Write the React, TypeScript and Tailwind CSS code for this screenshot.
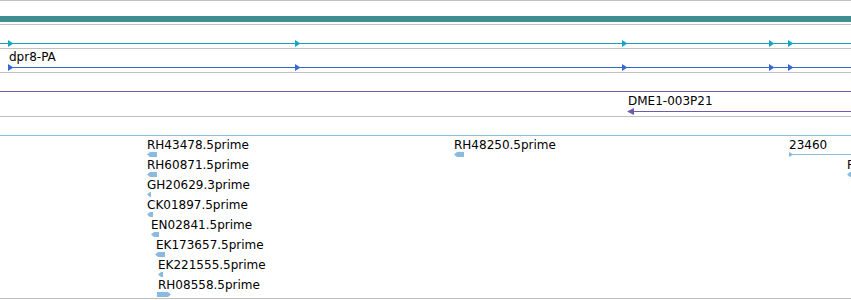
import React from "react";

const CYAN = "#1f9cb9";
const CYAN_HEAD = "#13a6c9";
const BLUE = "#3766c6";
const BLUE_HEAD = "#356ad8";
const PURPLE = "#6f5aab";
const LBLUE = "#8bbadf";

const heads = [8, 295, 622, 769, 788];

function Heads({ color }: { color: string }) {
  return (
    <>
      {heads.map((x) => (
        <polygon key={x} points={`${x},${15} ${x + 5.5},${18.5} ${x},${22}`} fill={color} />
      ))}
    </>
  );
}

function Feat({ w, right, color = LBLUE }: { w: number; right?: boolean; color?: string }) {
  const t = Math.min(3, w);
  const pts = right
    ? `0,0 ${w - t},0 ${w},2.5 ${w - t},5 0,5`
    : `0,2.5 ${t},0 ${w},0 ${w},5 ${t},5`;
  return (
    <svg width={w} height={5} className="block overflow-visible">
      <polygon points={pts} fill={color} />
    </svg>
  );
}

const ests: { label: string; tx: number; fx: number; w: number; right?: boolean }[] = [
  { label: "RH43478.5prime", tx: 147, fx: 147, w: 10 },
  { label: "RH60871.5prime", tx: 147, fx: 147, w: 10 },
  { label: "GH20629.3prime", tx: 147, fx: 147, w: 4 },
  { label: "CK01897.5prime", tx: 147, fx: 147, w: 6 },
  { label: "EN02841.5prime", tx: 151, fx: 151, w: 8 },
  { label: "EK173657.5prime", tx: 156, fx: 155, w: 10 },
  { label: "EK221555.5prime", tx: 158, fx: 158, w: 5 },
  { label: "RH08558.5prime", tx: 158, fx: 157, w: 14, right: true },
];

function EstRow({ label, tx, fx, w, right }: { label: string; tx: number; fx: number; w: number; right?: boolean }) {
  return (
    <div className="h-[20px] flex flex-col">
      <span className="whitespace-nowrap" style={{ marginLeft: tx }}>
        {label}
      </span>
      <div style={{ marginLeft: fx }}>
        <Feat w={w} right={right} />
      </div>
    </div>
  );
}

export default function App() {
  return (
    <div className="w-[851px] h-[300px] bg-white overflow-hidden font-['DejaVu_Sans',sans-serif] text-[12px] leading-[14px] text-black flex flex-col">
      {/* teal track */}
      <div className="h-[25px] shrink-0 border-t border-b border-[#c0c0c0] pt-[15px]">
        <div className="h-[6px] bg-[#3f8e90]" />
      </div>
      {/* cyan gene */}
      <div className="h-[24px] shrink-0 border-b border-[#c0c0c0]">
        <svg className="block" width={851} height={23}>
          <rect x={0} y={18} width={851} height={1} fill={CYAN} shapeRendering="crispEdges" />
          <Heads color={CYAN_HEAD} />
        </svg>
      </div>
      {/* dpr8-PA */}
      <div className="relative h-[24px] shrink-0 border-b border-[#c0c0c0]">
        <span className="absolute left-[9px] top-[1px] whitespace-nowrap">dpr8‑PA</span>
        <svg className="block" width={851} height={23}>
          <rect x={9} y={18} width={842} height={1} fill={BLUE} shapeRendering="crispEdges" />
          <Heads color={BLUE_HEAD} />
        </svg>
      </div>
      {/* empty track with purple bottom */}
      <div className="h-[19px] shrink-0 border-b border-[#6f5aab]" />
      {/* DME1-003P21 */}
      <div className="relative h-[25px] shrink-0 border-b border-[#c0c0c0]">
        <span className="absolute left-[628px] top-[2px] whitespace-nowrap">DME1‑003P21</span>
        <svg className="block" width={851} height={24}>
          <rect x={631} y={19} width={220} height={1} fill={PURPLE} shapeRendering="crispEdges" />
          <polygon points="627,19.5 634,16 634,23" fill={PURPLE} />
        </svg>
      </div>
      {/* empty track with light blue bottom */}
      <div className="h-[19px] shrink-0 border-b border-[#8bbadf]" />
      {/* ESTs */}
      <div className="relative h-[163px] shrink-0 border-b border-[#c0c0c0] pt-[2px] flex flex-col">
        {ests.map((e) => (
          <EstRow key={e.label} {...e} />
        ))}
        <div className="absolute left-[454px] top-[2px] flex flex-col">
          <span className="whitespace-nowrap">RH48250.5prime</span>
          <Feat w={10} />
        </div>
        <div className="absolute left-[789px] top-[2px] right-0 flex flex-col">
          <span className="whitespace-nowrap">23460</span>
          <svg className="block" width={62} height={5}>
            <rect x={0} y={2} width={62} height={1} fill={LBLUE} shapeRendering="crispEdges" />
            <polygon points="0,0 4.5,2.5 0,5" fill={LBLUE} />
          </svg>
        </div>
        <div className="absolute left-[847px] top-[22px] flex flex-col">
          <span className="whitespace-nowrap">R</span>
          <Feat w={6} />
        </div>
      </div>
    </div>
  );
}
